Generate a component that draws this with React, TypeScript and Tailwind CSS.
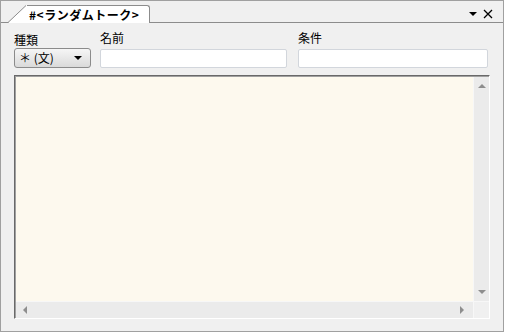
import React from 'react';

const font = { fontFamily: '"Noto Sans CJK JP", "Liberation Sans", sans-serif' };

// small solid triangles used by the select and the scrollbars
const Tri = ({ dir, className }: { dir: 'up' | 'down' | 'left' | 'right'; className?: string }) => {
  const pts = {
    up: '0,5 4,1 8,5',
    down: '0,1 8,1 4,5',
    left: '5,0 5,8 1,4',
    right: '1,0 1,8 5,4',
  }[dir];
  const vertical = dir === 'up' || dir === 'down';
  return (
    <svg
      className={className}
      width={vertical ? 8 : 6}
      height={vertical ? 6 : 8}
      viewBox={vertical ? '0 0 8 6' : '0 0 6 8'}
    >
      <polygon points={pts} fill="currentColor" />
    </svg>
  );
};

const App: React.FC = () => {
  return (
    <div className="w-[505px] h-[333px] bg-white" style={font}>
      <div className="w-[504px] h-[332px] bg-[#f0f0f0] border border-[#a0a0a0] flex flex-col">
        {/* Tab strip */}
        <div className="h-[22px] border-b border-[#8c8c8c] flex items-end relative">
          <div className="flex items-end ml-[7px] -mb-px">
            <svg width="19" height="18" viewBox="0 0 19 18" className="block">
              <polygon points="0,18 18,0.5 19,0.5 19,18" fill="#ffffff" />
              <line x1="0" y1="17.5" x2="18" y2="0.5" stroke="#8c8c8c" strokeWidth="1" />
            </svg>
            <div className="h-[18px] bg-white border-t border-r border-[#8c8c8c] rounded-tr-[3px] pl-[2px] pr-[10px] flex items-center">
              <span className="text-[12px] font-bold leading-none text-black tracking-[0.5px]">
                #&lt;ランダムトーク&gt;
              </span>
            </div>
          </div>
          <div className="ml-auto mr-[10px] mb-[3px] flex items-center gap-[6px]">
            <Tri dir="down" className="text-black" />
            <svg width="10" height="10" viewBox="0 0 10 10">
              <path d="M1 1 L9 9 M9 1 L1 9" stroke="#000" strokeWidth="1.3" />
            </svg>
          </div>
        </div>

        {/* Fields */}
        <div className="flex px-[13px] mt-[7px] text-[12px] leading-[16px] text-black">
          <div className="w-[77px] flex flex-col">
            <span className="mt-[2px]">種類</span>
            <div className="h-[20px] rounded-[3px] border border-[#8b8b8b] bg-gradient-to-b from-[#f6f6f6] to-[#dadada] flex items-center pl-[4px] pr-[8px]">
              <span className="text-[12px] leading-none whitespace-pre">＊ (文)</span>
              <Tri dir="down" className="ml-auto text-black" />
            </div>
          </div>
          <div className="w-[187px] ml-[9px] flex flex-col">
            <span className="mb-[3px]">名前</span>
            <div className="h-[19px] bg-white border border-[#d2d6dc] rounded-[2px]" />
          </div>
          <div className="flex-1 ml-[11px] mr-[2px] flex flex-col">
            <span className="mb-[3px]">条件</span>
            <div className="h-[19px] bg-white border border-[#d2d6dc] rounded-[2px]" />
          </div>
        </div>

        {/* Text area */}
        <div className="mx-[13px] mt-[7px] h-[244px] flex flex-col border-t border-l border-[#696969] border-r border-b border-r-white border-b-white shadow-[inset_1px_1px_0_#a0a0a0] pl-px pt-px">
          <div className="flex flex-1 min-h-0">
            <div className="flex-1 bg-[#fdf9ee]" />
            <div className="w-[16px] bg-[#ebebeb] border-l border-[#f7f7f7] flex flex-col items-center justify-between pt-[6px] pb-[6px] text-[#8e8e8e]">
              <Tri dir="up" />
              <Tri dir="down" />
            </div>
          </div>
          <div className="h-[17px] flex border-t border-[#f7f7f7]">
            <div className="flex-1 bg-[#ebebeb] flex items-center justify-between pl-[6px] pr-[8px] text-[#8e8e8e]">
              <Tri dir="left" />
              <Tri dir="right" />
            </div>
            <div className="w-[16px] bg-[#f0f0f0] border-l border-[#f7f7f7]" />
          </div>
        </div>
      </div>
    </div>
  );
};

export default App;
